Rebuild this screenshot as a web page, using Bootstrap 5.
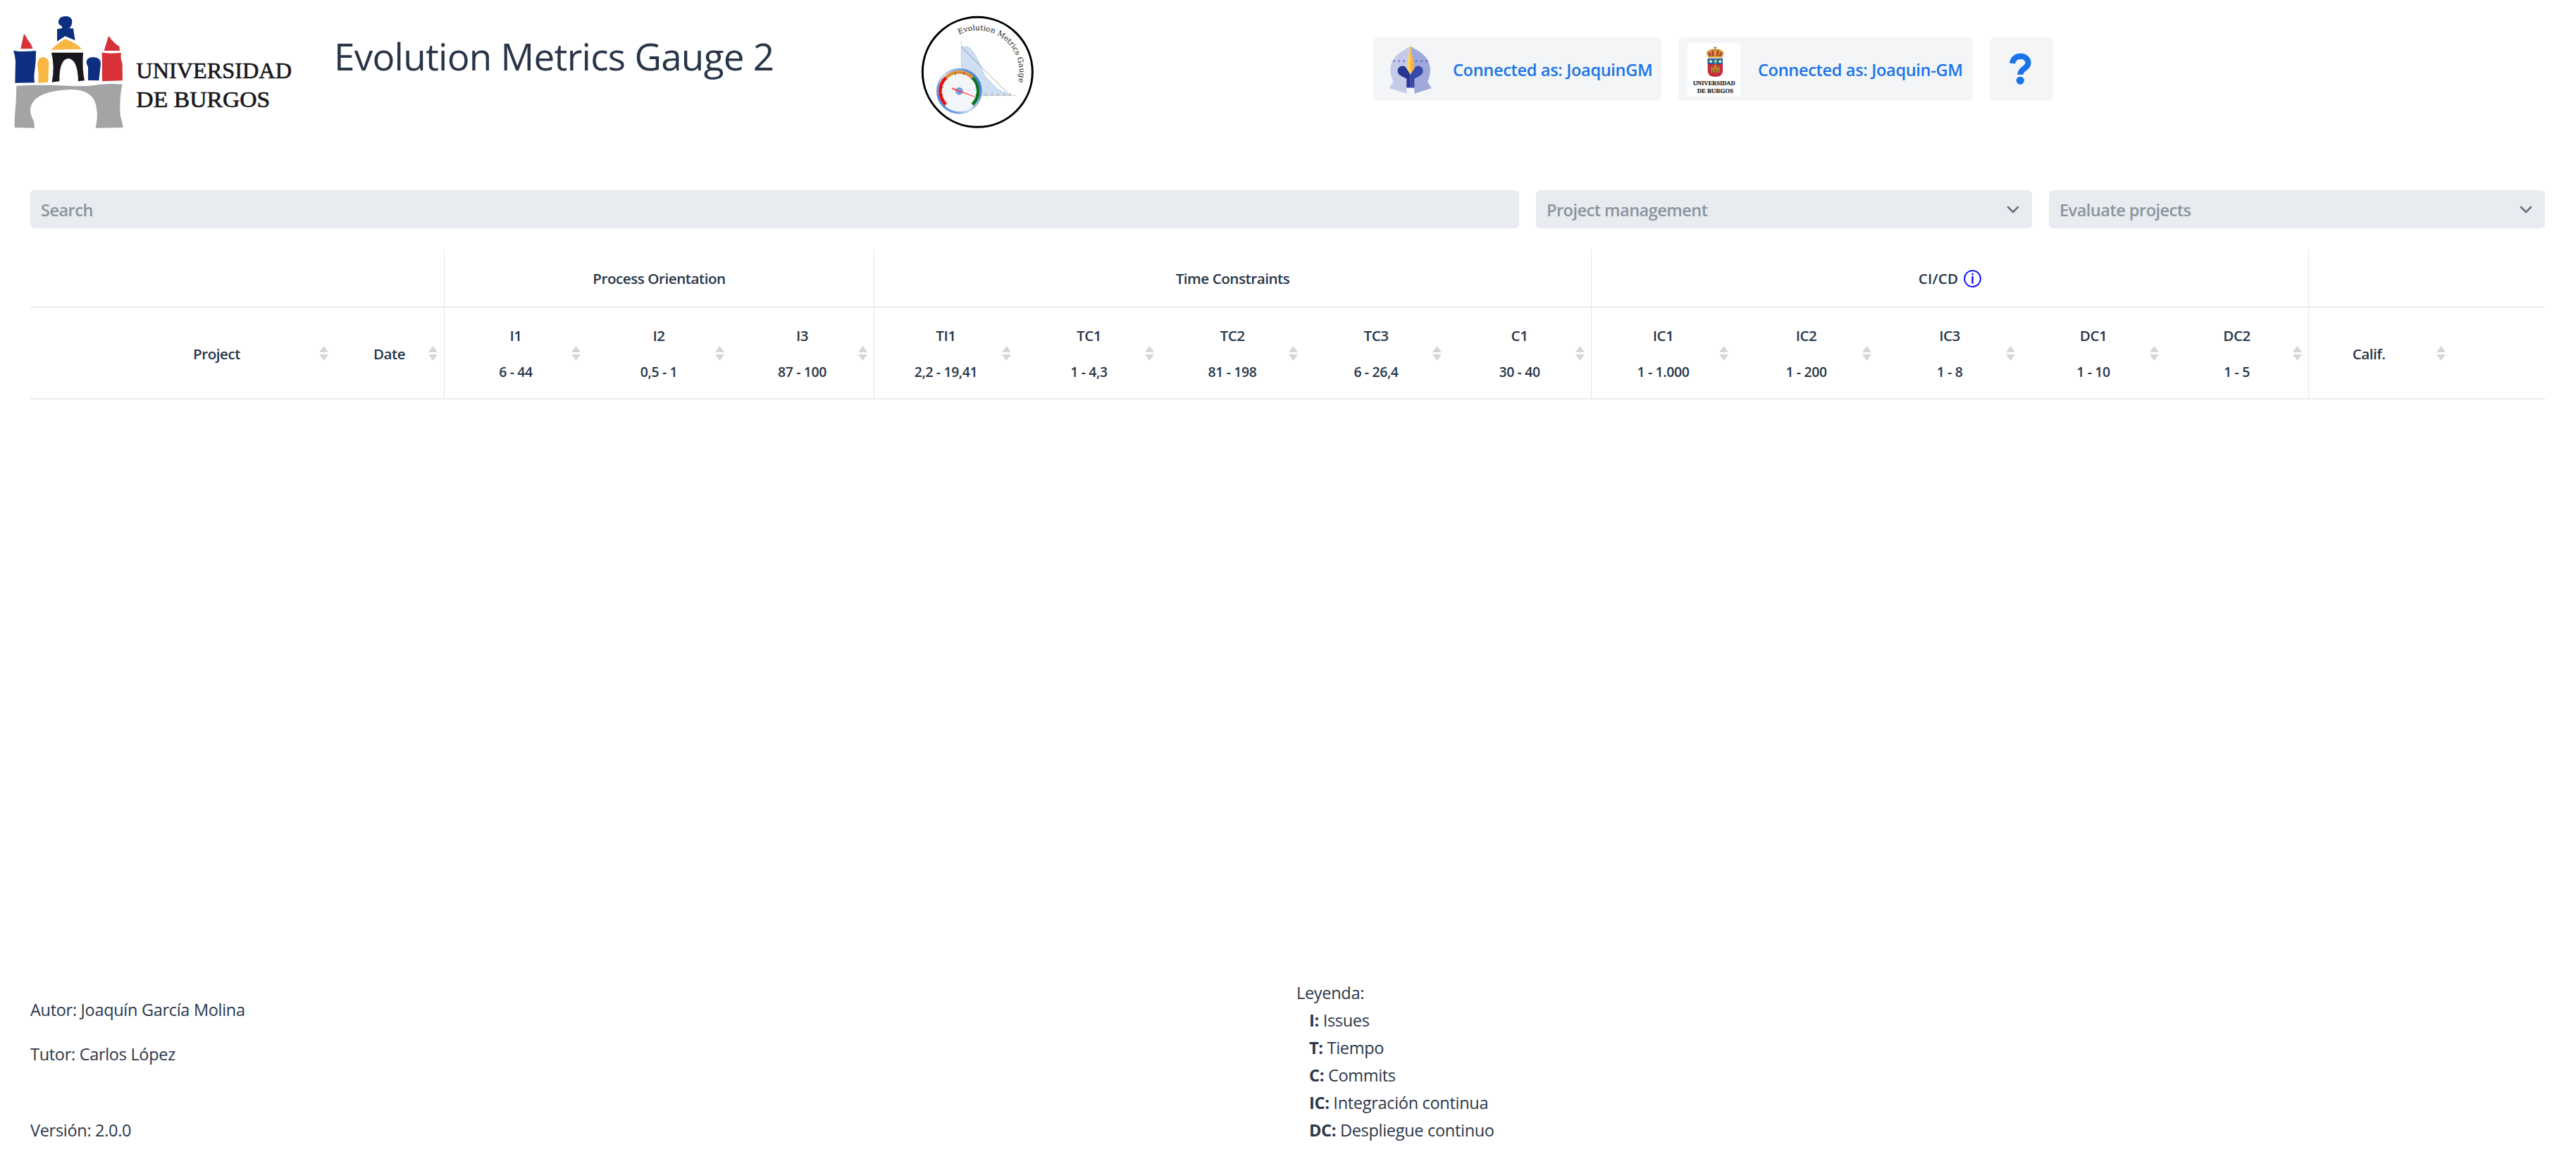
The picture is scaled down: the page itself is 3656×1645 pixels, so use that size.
<!DOCTYPE html>
<html lang="es">
<head>
<meta charset="utf-8">
<title>Evolution Metrics Gauge 2</title>
<link href="https://cdn.jsdelivr.net/npm/bootstrap@5.3.0/dist/css/bootstrap.min.css" rel="stylesheet">
<style>
body{font-family:"Open Sans","Noto Sans",sans-serif;font-size:23.5px;line-height:39px;letter-spacing:-.3px;color:#2a3648;background:#fff;width:3656px;height:1645px;overflow:hidden}
.top-bar{height:270px}
.brand-logo{width:440px;height:200px;letter-spacing:0}
.app-title{width:850px;padding:42px 0 0 34px;font-size:53px;line-height:76px;font-weight:400;letter-spacing:-.75px;color:#273547;white-space:nowrap}
.gauge-logo{width:190px;height:180px;margin-top:10px;letter-spacing:0}
.account-bar{margin:53px 0 0 469px;gap:24px}
.account-btn{height:90px;background:#f3f5f7;color:#1a73e8;border:0;border-radius:6px;padding:0 13px;font-size:23.5px;font-weight:600;gap:25px;white-space:nowrap;letter-spacing:-.3px}
.account-btn span{padding-top:3px}
.account-btn:hover{background:#e9edf1}
.gitlab-btn{width:409px}
.github-btn{width:418px}
.help-btn{width:90px;padding:0 3px 0 0}
.page-main{padding:0 44px 0 43px}
.filters{gap:24px;height:54px}
.filter-box{background:#e8ebef;border-radius:6px;height:54px;padding:2px 18px 0 15px;color:#8a949f;font-weight:600;font-size:23.5px;line-height:52px;letter-spacing:-.5px}
.search-box{width:2113px}
.pick-box{width:704px}
.metrics{width:3569px;margin-top:30px;table-layout:fixed;border-collapse:separate;border-spacing:0;font-size:20.6px;letter-spacing:-.45px;color:#273547}
.metrics th{padding:0;font-weight:600;text-align:center;vertical-align:middle;border-bottom:2px solid #e9ebef}
.metrics .groups th{height:83px;padding-top:2px}
.metrics .fields th{height:130px;padding-top:2px}
.metrics .edge{border-left:1px solid #e2e5e9}
.metrics .sorter{width:13px;height:21px;flex:none;margin:0 9px 2px 0}
.metrics .caption-box{padding-left:22px;line-height:51px;white-space:nowrap}
.metrics .caption-project{padding-left:119px}
.metrics .caption-calif{padding:0 11px 0 0}
.metrics .caption-box small{display:block;font-size:19.4px;letter-spacing:-.35px}
.metrics .cicd{letter-spacing:.2px}
.page-foot{margin-top:811px}
.credits{width:1797px}
.credits p{margin:0}
.credits .author{margin-top:36px}
.credits .tutor{margin-top:24px}
.credits .version{margin-top:69px}
.legend-title{margin-top:12px}
.legend-list{padding-left:18px}
</style>
</head>
<body>
<svg width="0" height="0" class="position-absolute"><defs>
<symbol id="sort" viewBox="0 0 13 21"><path d="M6.500 0L13 9H0zM0 12h13L6.500 21z" fill="#d4d6da"/></symbol>
<symbol id="chev" viewBox="0 0 18 12"><path d="M2 2l7 7 7-7" fill="none" stroke="#66717f" stroke-width="2.600" stroke-linecap="round"/></symbol>
</defs></svg>
<header class="top-bar d-flex align-items-start">
<svg class="brand-logo" viewBox="0 0 1320 600">
<path fill="#0c2f80" d="M249 88Q255 69 280 69Q307 70 307 93Q306 111 295 121H312Q315 145 320 172L277 154L243 176V124L263 121Q268 114 259 109Q247 104 249 88Z"/>
<path fill="#f8b642" d="M217 212Q247 183 278 166Q330 186 348 209Z"/>
<path fill="#d83238" d="M102 143L88 208L140 207Q136 190 121 173Q112 158 102 143ZM462 153L443 216H510L508 197Q488 188 462 153ZM434 223Q450 230 516 225Q511 245 521 270L522 343L435 346Z"/>
<path fill="#0c2f80" d="M57 215Q85 222 153 216Q154 255 149 290Q142 330 148 352L64 353L66 260Q64 235 57 215ZM368 262Q371 244 397 243Q429 244 429 270L421 343L375 342V285Q367 273 368 262Z"/>
<path fill="#f8b642" d="M159 275Q161 244 184 243Q208 246 208 272L205 350L162 353Q167 315 159 275Z"/>
<path fill="#19171c" d="M219 224H354Q349 295 360 343L333 346Q331 250 289 249Q252 255 253 346L221 350Q234 285 219 224Z"/>
<path fill="#a2a4a6" d="M70 365Q180 359 300 366Q370 370 430 359Q480 355 521 359Q508 410 512 490L525 543L407 545Q418 495 411 462Q403 382 302 381Q133 388 129 469Q129 490 145 518L147 545L62 543Q62 480 68 435Z"/>
<g fill="#19171c" stroke="#19171c" stroke-width="2" font-family="Liberation Serif" font-size="97"><text x="580" y="334" textLength="662" lengthAdjust="spacingAndGlyphs">UNIVERSIDAD</text><text x="580" y="456" textLength="570" lengthAdjust="spacingAndGlyphs">DE BURGOS</text></g>
</svg>
<h1 class="app-title mb-0">Evolution Metrics Gauge 2</h1>
<svg class="gauge-logo" viewBox="0 0 570 540">
<defs><path id="arc" d="M214 117A178 178 0 0 1 459 340"/><linearGradient id="rim" x1="0" y1="1" x2="1" y2=".3"><stop offset="0" stop-color="#2f70dd"/><stop offset=".3" stop-color="#6ca0ee"/><stop offset=".5" stop-color="#d5e2f6"/><stop offset="1" stop-color="#3979df"/></linearGradient></defs>
<circle cx="292" cy="277" r="234" fill="#fff" stroke="#000" stroke-width="9"/>
<path d="M223 377V169H251Q273 187 281 203L306 252Q320 292 332 304L378 350L431 377Z" fill="#cfdef2"/>
<path d="M223 169H251Q273 187 281 203L306 252Q320 292 332 304L378 350L431 377" fill="none" stroke="#aacbf4" stroke-width="3"/>
<path d="M223 144V377H459" fill="none" stroke="#bbb" stroke-width="2"/>
<path d="M223 169L431 377M328 366v12M354 366v12M380 366v12M406 366v12M432 366v12" fill="none" stroke="#777" stroke-width="2"/>
<circle cx="214" cy="358" r="92" fill="#f3f5f8" stroke="url(#rim)" stroke-width="9"/>
<circle cx="214" cy="358" r="97" fill="none" stroke="#7f8b9c" stroke-width="1"/>
<g fill="none" stroke-width="14"><path d="M156 414A80 80 0 0 1 157 301" stroke="#fb0f0c"/><path d="M157 301A80 80 0 0 1 271 301" stroke="#ef9a35"/><path d="M271 301A80 80 0 0 1 272 414" stroke="#0b7e22"/></g>
<path d="M156 414A80 80 0 1 1 272 414" fill="none" stroke="#222" stroke-width="7" stroke-dasharray="1.500 5" opacity=".5"/>
<path d="M148 424l14-14M133 376l14-3M133 340l14 3M155 298l10 10M196 276l3 14M236 276l-3 14M273 298l-10 10M297 338l-14 3M297 377l-14-3M280 424l-14-14" stroke="#333" stroke-width="2"/>
<circle cx="214" cy="358" r="16" fill="#6d9eea"/><path d="M185 344L280 382L184 349Z" fill="#ff3838" stroke="#ff4444" stroke-width="2"/>
<text font-family="DejaVu Serif" font-size="32" fill="#222"><textPath href="#arc">Evolution Metrics Gauge</textPath></text>
</svg>
<div class="account-bar d-flex">
<button class="account-btn gitlab-btn btn d-flex align-items-center">
<svg class="flex-shrink-0" width="75" height="75" viewBox="0 0 225 225"><path fill="#c5cae9" d="M119 15C60 45 38 70 34 110Q34 140 46 164L29 193L103 215V192H119Z"/><path fill="#9fa8da" d="M119 15C180 45 200 70 204 110Q204 140 192 164L209 193L136 215V192H119Z"/><g fill="#8d95cf"><circle cx="50" cy="77" r="5.500"/><circle cx="71" cy="77" r="5.500"/><circle cx="92" cy="77" r="5.500"/></g><g fill="#747fc4"><circle cx="145" cy="77" r="5.500"/><circle cx="167" cy="77" r="5.500"/><circle cx="188" cy="77" r="5.500"/></g><path fill="#283593" d="M119 134L103 108C92 88 64 98 65 119C66 132 73 138 103 152V190H119Z"/><path fill="#3949ab" d="M119 134L136 108C146 88 174 98 173 119C172 132 165 138 136 152V190H119Z"/><path fill="#ffd45c" d="M119 4L103 108L119 134Z"/><path fill="#ffb637" d="M119 4L136 108L119 134Z"/></svg>
<span>Connected as: JoaquinGM</span></button>
<button class="account-btn github-btn btn d-flex align-items-center">
<svg class="flex-shrink-0" width="75" height="75" viewBox="0 0 225 225"><path fill="#fff" d="M0 0h225v225H0z"/><path d="M118 14v15M111 20h14" stroke="#8b8740" stroke-width="3"/><path fill="#d5953a" d="M90 63Q75 45 86 34Q102 24 118 25Q135 24 149 34Q160 45 146 63Z"/><path d="M92 40l7 17M106 32l3 24M130 32l-3 24M144 40l-7 17" stroke="#a8323a" stroke-width="7"/><path d="M89 61h58" stroke="#e6b45b" stroke-width="6"/><path fill="#c62b3b" d="M86 66h64v53q0 25-32 25t-32-25z"/><path fill="#1b66a3" d="M86 66h64v24H86z"/><g fill="#e9e6c8"><circle cx="99" cy="79" r="6"/><circle cx="139" cy="79" r="6"/></g><path d="M119 70v17M111 78h16" stroke="#d7ce76" stroke-width="5"/><path fill="#bd842d" d="M100 126v-25h7v5h5v-12h13v12h5v-5h7v25z"/><path d="M107 125v-10M118 125v-13M130 125v-10" stroke="#79451f" stroke-width="4"/><g font-family="Liberation Serif" font-size="27" fill="#222" stroke="#222" stroke-width=".7" letter-spacing="0"><text x="23" y="179" textLength="180" lengthAdjust="spacingAndGlyphs">UNIVERSIDAD</text><text x="41" y="212" textLength="154" lengthAdjust="spacingAndGlyphs">DE BURGOS</text></g></svg>
<span>Connected as: Joaquin-GM</span></button>
<button class="account-btn help-btn btn d-flex align-items-center justify-content-center" aria-label="Help"><svg width="32" height="46" viewBox="-.5 0 32 46"><path d="M3.500 15C4.500 8 9 4.900 15 4.900C21 4.900 26 8.500 26 14.500C26 22 15 22 14.800 31" fill="none" stroke="#1a73e8" stroke-width="8.200"/><circle cx="14.700" cy="39.300" r="5.600" fill="#1a73e8"/></svg></button>
</div>
</header>
<main class="page-main">
<div class="filters d-flex">
<div class="search-box filter-box">Search</div>
<div class="pick-box filter-box d-flex justify-content-between align-items-center">Project management<svg width="18" height="12"><use href="#chev"/></svg></div>
<div class="pick-box filter-box d-flex justify-content-between align-items-center">Evaluate projects<svg width="18" height="12"><use href="#chev"/></svg></div>
</div>
<table class="metrics">
<colgroup><col style="width:432px"><col style="width:155px"><col style="width:203px"><col style="width:204px"><col style="width:203px"><col style="width:204px"><col style="width:203px"><col style="width:204px"><col style="width:204px"><col style="width:203px"><col style="width:204px"><col style="width:203px"><col style="width:204px"><col style="width:204px"><col style="width:203px"><col style="width:204px"><col style="width:132px"></colgroup>
<thead>
<tr class="groups"><th colspan="2"></th><th colspan="3" class="edge">Process Orientation</th><th colspan="5" class="edge">Time Constraints</th><th colspan="5" class="edge"><span class="cicd d-inline-flex align-items-center">CI/CD<svg class="ms-2" width="25" height="25" viewBox="0 0 25 25"><circle cx="12.500" cy="12.500" r="11.400" fill="none" stroke="#00f" stroke-width="1.800"/><path d="M12.500 9v10.500M12.500 5v2.500" stroke="#00f" stroke-width="2.300"/></svg></span></th><th colspan="2" class="edge"></th></tr>
<tr class="fields">
<th><div class="d-flex align-items-center"><div class="caption-box caption-project flex-fill">Project</div><svg class="sorter"><use href="#sort"/></svg></div></th>
<th><div class="d-flex align-items-center"><div class="caption-box flex-fill">Date</div><svg class="sorter"><use href="#sort"/></svg></div></th>
<th class="edge"><div class="d-flex align-items-center"><div class="caption-box flex-fill">I1<small>6 - 44</small></div><svg class="sorter"><use href="#sort"/></svg></div></th>
<th><div class="d-flex align-items-center"><div class="caption-box flex-fill">I2<small>0,5 - 1</small></div><svg class="sorter"><use href="#sort"/></svg></div></th>
<th><div class="d-flex align-items-center"><div class="caption-box flex-fill">I3<small>87 - 100</small></div><svg class="sorter"><use href="#sort"/></svg></div></th>
<th class="edge"><div class="d-flex align-items-center"><div class="caption-box flex-fill">TI1<small>2,2 - 19,41</small></div><svg class="sorter"><use href="#sort"/></svg></div></th>
<th><div class="d-flex align-items-center"><div class="caption-box flex-fill">TC1<small>1 - 4,3</small></div><svg class="sorter"><use href="#sort"/></svg></div></th>
<th><div class="d-flex align-items-center"><div class="caption-box flex-fill">TC2<small>81 - 198</small></div><svg class="sorter"><use href="#sort"/></svg></div></th>
<th><div class="d-flex align-items-center"><div class="caption-box flex-fill">TC3<small>6 - 26,4</small></div><svg class="sorter"><use href="#sort"/></svg></div></th>
<th><div class="d-flex align-items-center"><div class="caption-box flex-fill">C1<small>30 - 40</small></div><svg class="sorter"><use href="#sort"/></svg></div></th>
<th class="edge"><div class="d-flex align-items-center"><div class="caption-box flex-fill">IC1<small>1 - 1.000</small></div><svg class="sorter"><use href="#sort"/></svg></div></th>
<th><div class="d-flex align-items-center"><div class="caption-box flex-fill">IC2<small>1 - 200</small></div><svg class="sorter"><use href="#sort"/></svg></div></th>
<th><div class="d-flex align-items-center"><div class="caption-box flex-fill">IC3<small>1 - 8</small></div><svg class="sorter"><use href="#sort"/></svg></div></th>
<th><div class="d-flex align-items-center"><div class="caption-box flex-fill">DC1<small>1 - 10</small></div><svg class="sorter"><use href="#sort"/></svg></div></th>
<th><div class="d-flex align-items-center"><div class="caption-box flex-fill">DC2<small>1 - 5</small></div><svg class="sorter"><use href="#sort"/></svg></div></th>
<th class="edge"><div class="d-flex align-items-center"><div class="caption-box caption-calif flex-fill">Calif.</div><svg class="sorter"><use href="#sort"/></svg></div></th>
<th></th>
</tr></thead></table>
<footer class="page-foot d-flex">
<div class="credits"><p class="author">Autor: Joaquín García Molina</p><p class="tutor">Tutor: Carlos López</p><p class="version">Versión: 2.0.0</p></div>
<div><div class="legend-title">Leyenda:</div><ul class="legend-list list-unstyled mb-0"><li><b>I:</b> Issues</li><li><b>T:</b> Tiempo</li><li><b>C:</b> Commits</li><li><b>IC:</b> Integración continua</li><li><b>DC:</b> Despliegue continuo</li></ul></div>
</footer>
</main>
<script src="https://cdn.jsdelivr.net/npm/bootstrap@5.3.0/dist/js/bootstrap.bundle.min.js"></script>
</body>
</html>
